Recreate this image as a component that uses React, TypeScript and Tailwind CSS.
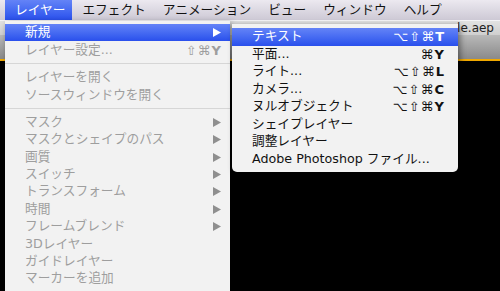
import React from "react"

type Item =
  | { sep: true }
  | {
      sep?: false
      label: string
      shortcut?: string
      arrow?: boolean
      disabled?: boolean
      active?: boolean
    }

const MENUBAR = ["レイヤー", "エフェクト", "アニメーション", "ビュー", "ウィンドウ", "ヘルプ"]

const LAYER_MENU: Item[] = [
  { label: "新規", arrow: true, active: true },
  { label: "レイヤー設定...", shortcut: "⇧⌘Y", disabled: true },
  { sep: true },
  { label: "レイヤーを開く", disabled: true },
  { label: "ソースウィンドウを開く", disabled: true },
  { sep: true },
  { label: "マスク", arrow: true, disabled: true },
  { label: "マスクとシェイプのパス", arrow: true, disabled: true },
  { label: "画質", arrow: true, disabled: true },
  { label: "スイッチ", arrow: true, disabled: true },
  { label: "トランスフォーム", arrow: true, disabled: true },
  { label: "時間", arrow: true, disabled: true },
  { label: "フレームブレンド", arrow: true, disabled: true },
  { label: "3Dレイヤー", disabled: true },
  { label: "ガイドレイヤー", disabled: true },
  { label: "マーカーを追加", disabled: true },
]

const NEW_MENU: Item[] = [
  { label: "テキスト", shortcut: "⌥⇧⌘T", active: true },
  { label: "平面...", shortcut: "⌘Y" },
  { label: "ライト...", shortcut: "⌥⇧⌘L" },
  { label: "カメラ...", shortcut: "⌥⇧⌘C" },
  { label: "ヌルオブジェクト", shortcut: "⌥⇧⌘Y" },
  { label: "シェイプレイヤー" },
  { label: "調整レイヤー" },
  { label: "Adobe Photoshop ファイル..." },
]

const FONT = "font-['DejaVu_Sans','Noto_Sans_CJK_JP',sans-serif]"
const HILITE = "bg-gradient-to-b from-[#6483f7] to-[#2a4fec] text-white"

function Arrow({ active }: { active?: boolean }) {
  return (
    <svg width="8" height="9" viewBox="0 0 8 9" className="shrink-0">
      <polygon points="0,0 8,4.5 0,9" fill={active ? "#ffffff" : "#8f8f8f"} />
    </svg>
  )
}

function Shortcut({ keys }: { keys: string }) {
  return (
    <span className="flex items-center gap-[1px] text-[13px]">
      {Array.from(keys).map((k, i) => (
        <span key={i} className={/[A-Z]/.test(k) ? "font-semibold" : ""}>
          {k}
        </span>
      ))}
    </span>
  )
}

function MenuRows({ items, rowH, padR }: { items: Item[]; rowH: string; padR: string }) {
  return (
    <>
      {items.map((item, i) => {
        if (item.sep) {
          return (
            <div key={i} className="flex h-[10px] items-center">
              <div className="h-px w-full bg-[#d6d6d6]" />
            </div>
          )
        }
        const color = item.active ? HILITE : item.disabled ? "text-[#9e9e9e]" : "text-[#111]"
        return (
          <div
            key={i}
            className={`flex ${rowH} items-center justify-between pl-[20px] ${padR} ${color}`}
          >
            <span className="whitespace-nowrap">{item.label}</span>
            {item.arrow && <Arrow active={item.active} />}
            {item.shortcut && <Shortcut keys={item.shortcut} />}
          </div>
        )
      })}
    </>
  )
}

export default function App() {
  return (
    <div className={`relative flex h-[291px] w-[500px] flex-col overflow-hidden bg-black text-[12.7px] leading-none ${FONT}`}>
      {/* menu bar */}
      <div className="flex h-[20px] items-stretch bg-gradient-to-b from-[#ece9f0] to-[#cdc9d5] pl-[5px] text-[#111]">
        {MENUBAR.map((m, i) => (
          <div
            key={m}
            className={`flex items-center pl-[10px] pr-[7px] ${i === 0 ? HILITE : ""}`}
          >
            {m}
          </div>
        ))}
      </div>
      <div className="h-px bg-[#f4f3f6]" />

      {/* window behind the menus */}
      <div className="flex h-[14px] items-center justify-end bg-gradient-to-b from-[#e2e2e2] to-[#cfcfcf] pr-[6px] text-[12px] text-[#222]">
        mple.aep
      </div>
      <div className="h-[24px] bg-gradient-to-b from-[#b9b9b9] to-[#8a8a8a]" />
      <div className="h-[2px] bg-[#f0a800]" />
      <div className="flex-1 bg-black" />

      {/* レイヤー menu */}
      <div className="absolute left-[5px] top-[21px] w-[225px] bg-[#f2f2f2] pt-[3px] pb-[6px] shadow-[2px_2px_6px_rgba(0,0,0,0.45)]">
        <MenuRows items={LAYER_MENU} rowH="h-[17.4px]" padR="pr-[9px]" />
      </div>

      {/* 新規 submenu */}
      <div className="absolute left-[232px] top-[24px] w-[226px] overflow-hidden rounded-b-[5px] bg-[#f2f2f2] py-[4px] shadow-[2px_2px_6px_rgba(0,0,0,0.45)]">
        <MenuRows items={NEW_MENU} rowH="h-[17.5px]" padR="pr-[14px]" />
      </div>
    </div>
  )
}
